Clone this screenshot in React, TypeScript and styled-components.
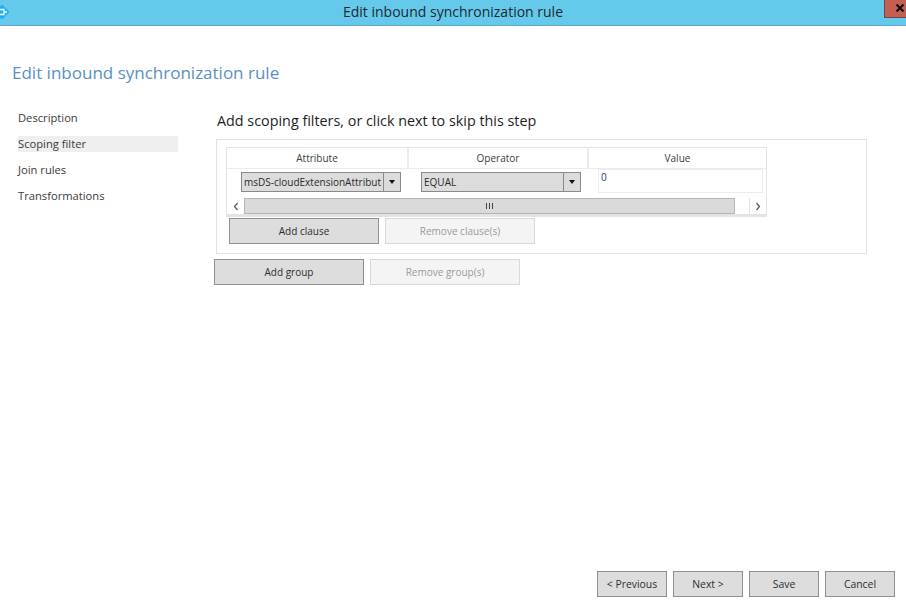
import React from "react";
import styled, { createGlobalStyle } from "styled-components";

const Global = createGlobalStyle`
  html, body { margin: 0; padding: 0; background: #fff; overflow: hidden; }
  body { font-family: "Open Sans", "Noto Sans", sans-serif; color: #333; }
`;

const Page = styled.div`
  width: 906px;
  height: 604px;
  display: flex;
  flex-direction: column;
  background: #fff;
  position: relative;
`;

const TitleBar = styled.header`
  height: 25px;
  flex: none;
  display: flex;
  align-items: flex-start;
  justify-content: center;
  position: relative;
  background: #64c9eb;
  border-bottom: 1px solid #5ea9bf;
`;

const WindowTitle = styled.div`
  font-size: 14px;
  line-height: 24px;
  color: #1f2a30;
`;

const AppIcon = styled.svg`
  position: absolute;
  left: 0;
  top: 4px;
  width: 10px;
  height: 16px;
`;

const Close = styled.div`
  position: absolute;
  right: 0;
  top: 0;
  width: 22px;
  height: 18px;
  box-sizing: border-box;
  padding-right: 2px;
  padding-bottom: 1px;
  background: #c45d52;
  border-left: 1px solid #6d4a48;
  border-bottom: 1px solid #6d4a48;
  display: flex;
  align-items: center;
  justify-content: flex-end;
`;

const Heading = styled.h1`
  margin: 35px 0 0 12px;
  font-size: 17px;
  line-height: 24px;
  font-weight: 400;
  color: #5b8fc2;
`;

const Body = styled.div`
  display: flex;
  margin-top: 24px;
  flex: 1;
  min-height: 0;
`;

const Nav = styled.nav`
  width: 160px;
  margin-left: 18px;
  margin-top: 1px;
  display: flex;
  flex-direction: column;
  gap: 10px;
  flex: none;
`;

const NavItem = styled.div<{ $active?: boolean }>`
  height: 16px;
  line-height: 16px;
  font-size: 11.2px;
  color: #3a3a3a;
  background: ${(p) => (p.$active ? "#efefef" : "transparent")};
`;

const Content = styled.main`
  margin-left: 36px;
  flex: 1;
  display: flex;
  flex-direction: column;
`;

const StepTitle = styled.h2`
  margin: 2px 0 8px 3px;
  font-size: 14.35px;
  line-height: 20px;
  font-weight: 400;
  color: #1e1e1e;
`;

const Panel = styled.section`
  width: 651px;
  height: 115px;
  box-sizing: border-box;
  margin-left: 2px;
  border: 1px solid #e2e2e2;
  padding: 7px 9px 0;
`;

const Table = styled.div`
  width: 541px;
  height: 70px;
  box-sizing: border-box;
  border: 1px solid #e4e4e4;
  border-bottom-width: 3px;
  display: flex;
  flex-direction: column;
`;

const HeaderRow = styled.div`
  display: grid;
  grid-template-columns: 180px 180px 179px;
  height: 19px;
  flex: none;
`;

const HeaderCell = styled.div`
  font-size: 10px;
  line-height: 20px;
  text-align: center;
  color: #3c3c3c;
  border-left: 2px solid #ececec;
  border-bottom: 1px solid #ececec;
  &:first-child { border-left: none; }
`;

const DataRow = styled.div`
  display: grid;
  grid-template-columns: 180px 180px 179px;
  height: 30px;
  flex: none;
`;

const Cell = styled.div`
  padding: 5px 6px 0 14px;
`;

const InputCell = styled.div`
  padding: 2px 3px 0 11px;
`;

const Combo = styled.div`
  height: 20px;
  display: flex;
  box-sizing: border-box;
  border: 1px solid #8a8a8a;
  background: #dcdcdc;
`;

const ComboText = styled.div`
  flex: 1;
  min-width: 0;
  padding-left: 2px;
  font-size: 10px;
  line-height: 19px;
  white-space: nowrap;
  overflow: hidden;
  color: #2a2a2a;
`;

const ComboArrow = styled.div`
  width: 16px;
  flex: none;
  border-left: 1px solid #8a8a8a;
  display: flex;
  align-items: center;
  justify-content: center;
  &::after {
    content: "";
    border-left: 3.5px solid transparent;
    border-right: 3.5px solid transparent;
    border-top: 4px solid #111;
  }
`;

const ValueBox = styled.div`
  height: 24px;
  box-sizing: border-box;
  border: 1px solid #ececec;
  padding-left: 2px;
  font-size: 10px;
  line-height: 15px;
  color: #1d3d6b;
`;

const ScrollBar = styled.div`
  height: 17px;
  margin-top: 1px;
  display: flex;
  align-items: stretch;
`;

const ScrollButton = styled.div<{ $end?: boolean }>`
  width: 16px;
  flex: none;
  margin-left: ${(p) => (p.$end ? "14px" : "1px")};
  display: flex;
  align-items: center;
  justify-content: center;
  color: #555;
  border-left: ${(p) => (p.$end ? "1px solid #e4e4e4" : "none")};
`;

const ScrollThumb = styled.div`
  width: 491px;
  box-sizing: border-box;
  background: #dadada;
  border: 1px solid #b5b5b5;
  display: flex;
  align-items: center;
  justify-content: center;
  gap: 1px;
  & > i {
    width: 1px;
    height: 6px;
    background: #444;
    margin-right: 1px;
  }
`;

const ButtonRow = styled.div<{ $inset?: boolean; $top: number }>`
  display: flex;
  gap: 6px;
  margin-top: ${(p) => p.$top}px;
  margin-left: ${(p) => (p.$inset ? "3px" : "0")};
`;

const Button = styled.div<{ $disabled?: boolean }>`
  width: 150px;
  height: 26px;
  box-sizing: border-box;
  flex: none;
  display: flex;
  align-items: center;
  justify-content: center;
  font-size: 10px;
  background: ${(p) => (p.$disabled ? "#f4f4f4" : "#dddddd")};
  border: 1px solid ${(p) => (p.$disabled ? "#d9d9d9" : "#8f8f8f")};
  color: ${(p) => (p.$disabled ? "#9a9a9a" : "#2e2e2e")};
`;

const FooterButton = styled(Button)`
  width: 70px;
  font-size: 10.4px;
`;

const Footer = styled.footer`
  position: absolute;
  left: 597px;
  top: 571px;
  display: flex;
  gap: 6px;
`;

export default function App() {
  return (
    <Page>
      <Global />
      <TitleBar>
        <AppIcon viewBox="0 0 10 16">
          <path d="M2 0.5 L9.5 8 L2 15.5 L0 13.5 L0 2.5 Z" fill="#18b2f2" />
          <path d="M0 5.5 H4 V10.5 H0 M4 8 H7" fill="none" stroke="#fff" strokeWidth="1.3" />
        </AppIcon>
        <WindowTitle>Edit inbound synchronization rule</WindowTitle>
        <Close>
          <svg width="8" height="8" viewBox="0 0 8 8">
            <path d="M0.5 0.5 L7.5 7.5 M7.5 0.5 L0.5 7.5" stroke="#111" strokeWidth="2.2" />
          </svg>
        </Close>
      </TitleBar>
      <Heading>Edit inbound synchronization rule</Heading>
      <Body>
        <Nav>
          <NavItem>Description</NavItem>
          <NavItem $active>Scoping filter</NavItem>
          <NavItem>Join rules</NavItem>
          <NavItem>Transformations</NavItem>
        </Nav>
        <Content>
          <StepTitle>Add scoping filters, or click next to skip this step</StepTitle>
          <Panel>
            <Table>
              <HeaderRow>
                <HeaderCell>Attribute</HeaderCell>
                <HeaderCell>Operator</HeaderCell>
                <HeaderCell>Value</HeaderCell>
              </HeaderRow>
              <DataRow>
                <Cell>
                  <Combo>
                    <ComboText>msDS-cloudExtensionAttribut</ComboText>
                    <ComboArrow />
                  </Combo>
                </Cell>
                <Cell>
                  <Combo>
                    <ComboText>EQUAL</ComboText>
                    <ComboArrow />
                  </Combo>
                </Cell>
                <InputCell>
                  <ValueBox>0</ValueBox>
                </InputCell>
              </DataRow>
              <ScrollBar>
                <ScrollButton>
                  <svg width="6" height="9" viewBox="0 0 6 9">
                    <path d="M4.5 1 L1.5 4.5 L4.5 8" fill="none" stroke="#555" strokeWidth="1.2" />
                  </svg>
                </ScrollButton>
                <ScrollThumb>
                  <i />
                  <i />
                  <i />
                </ScrollThumb>
                <ScrollButton $end>
                  <svg width="6" height="9" viewBox="0 0 6 9">
                    <path d="M1.5 1 L4.5 4.5 L1.5 8" fill="none" stroke="#555" strokeWidth="1.2" />
                  </svg>
                </ScrollButton>
              </ScrollBar>
            </Table>
            <ButtonRow $inset $top={1}>
              <Button>Add clause</Button>
              <Button $disabled>Remove clause(s)</Button>
            </ButtonRow>
          </Panel>
          <ButtonRow $top={5}>
            <Button>Add group</Button>
            <Button $disabled>Remove group(s)</Button>
          </ButtonRow>
        </Content>
      </Body>
      <Footer>
        <FooterButton>&lt; Previous</FooterButton>
        <FooterButton>Next &gt;</FooterButton>
        <FooterButton>Save</FooterButton>
        <FooterButton>Cancel</FooterButton>
      </Footer>
    </Page>
  );
}
